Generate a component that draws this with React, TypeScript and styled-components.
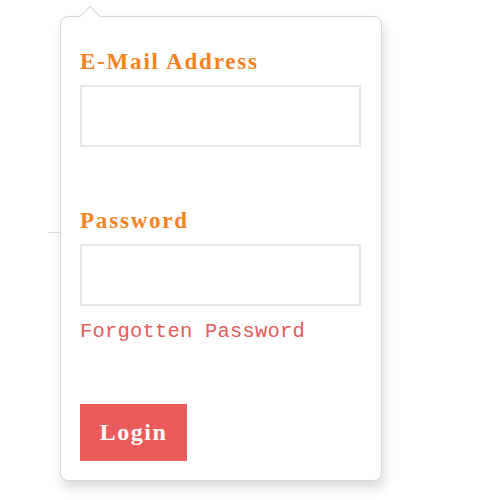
import styled, { createGlobalStyle } from "styled-components";

const GlobalStyle = createGlobalStyle`
  html, body {
    margin: 0;
    padding: 0;
    background: #ffffff;
  }
`;

const Page = styled.div`
  width: 500px;
  height: 500px;
  position: relative;
  overflow: hidden;
  background: #ffffff;
`;

const BackdropLine = styled.div`
  position: absolute;
  left: 48px;
  top: 232px;
  width: 14px;
  height: 1px;
  background: #dcdcdc;
`;

const Dropdown = styled.form`
  position: absolute;
  left: 60px;
  top: 16px;
  width: 322px;
  height: 465px;
  box-sizing: border-box;
  padding: 32px 20px 0 19px;
  background: #ffffff;
  border: 1px solid #d6d6d6;
  border-radius: 8px;
  box-shadow: 2px 7px 12px rgba(0, 0, 0, 0.14);
  display: flex;
  flex-direction: column;
  align-items: flex-start;

  /* caret */
  &::before {
    content: "";
    position: absolute;
    left: 21px;
    top: -8px;
    width: 15px;
    height: 15px;
    background: #ffffff;
    border-left: 1px solid #d6d6d6;
    border-top: 1px solid #d6d6d6;
    transform: rotate(45deg);
  }
`;

const Label = styled.label<{ $top?: number }>`
  display: block;
  margin-top: ${(p) => p.$top ?? 0}px;
  font-family: "Liberation Serif", "DejaVu Serif", serif;
  font-weight: bold;
  font-size: 23px;
  line-height: 26px;
  letter-spacing: 1.8px;
  color: #f5821f;
`;

const Field = styled.input`
  display: block;
  margin-top: 10px;
  width: 100%;
  height: 62px;
  box-sizing: border-box;
  border: 2px solid #e6e6e6;
  background: #ffffff;
  outline: none;
  padding: 0 10px;
`;

const ForgotLink = styled.a`
  display: block;
  margin-top: 14px;
  font-family: "Liberation Mono", "DejaVu Sans Mono", monospace;
  font-size: 20.5px;
  line-height: 24px;
  color: #e55a5a;
  text-decoration: none;
  letter-spacing: 0.2px;
`;

const LoginButton = styled.button`
  margin-top: 60px;
  width: 107px;
  height: 57px;
  border: none;
  background: #eb5b5b;
  color: #ffffff;
  font-family: "Liberation Serif", "DejaVu Serif", serif;
  font-weight: bold;
  font-size: 24px;
  letter-spacing: 1.5px;
  padding: 0;
  cursor: pointer;
`;

export default function App() {
  return (
    <Page>
      <GlobalStyle />
      <BackdropLine />
      <Dropdown onSubmit={(e) => e.preventDefault()}>
        <Label htmlFor="email">E-Mail Address</Label>
        <Field id="email" type="email" />
        <Label htmlFor="password" $top={61}>
          Password
        </Label>
        <Field id="password" type="password" />
        <ForgotLink href="#">Forgotten Password</ForgotLink>
        <LoginButton type="submit">Login</LoginButton>
      </Dropdown>
    </Page>
  );
}
